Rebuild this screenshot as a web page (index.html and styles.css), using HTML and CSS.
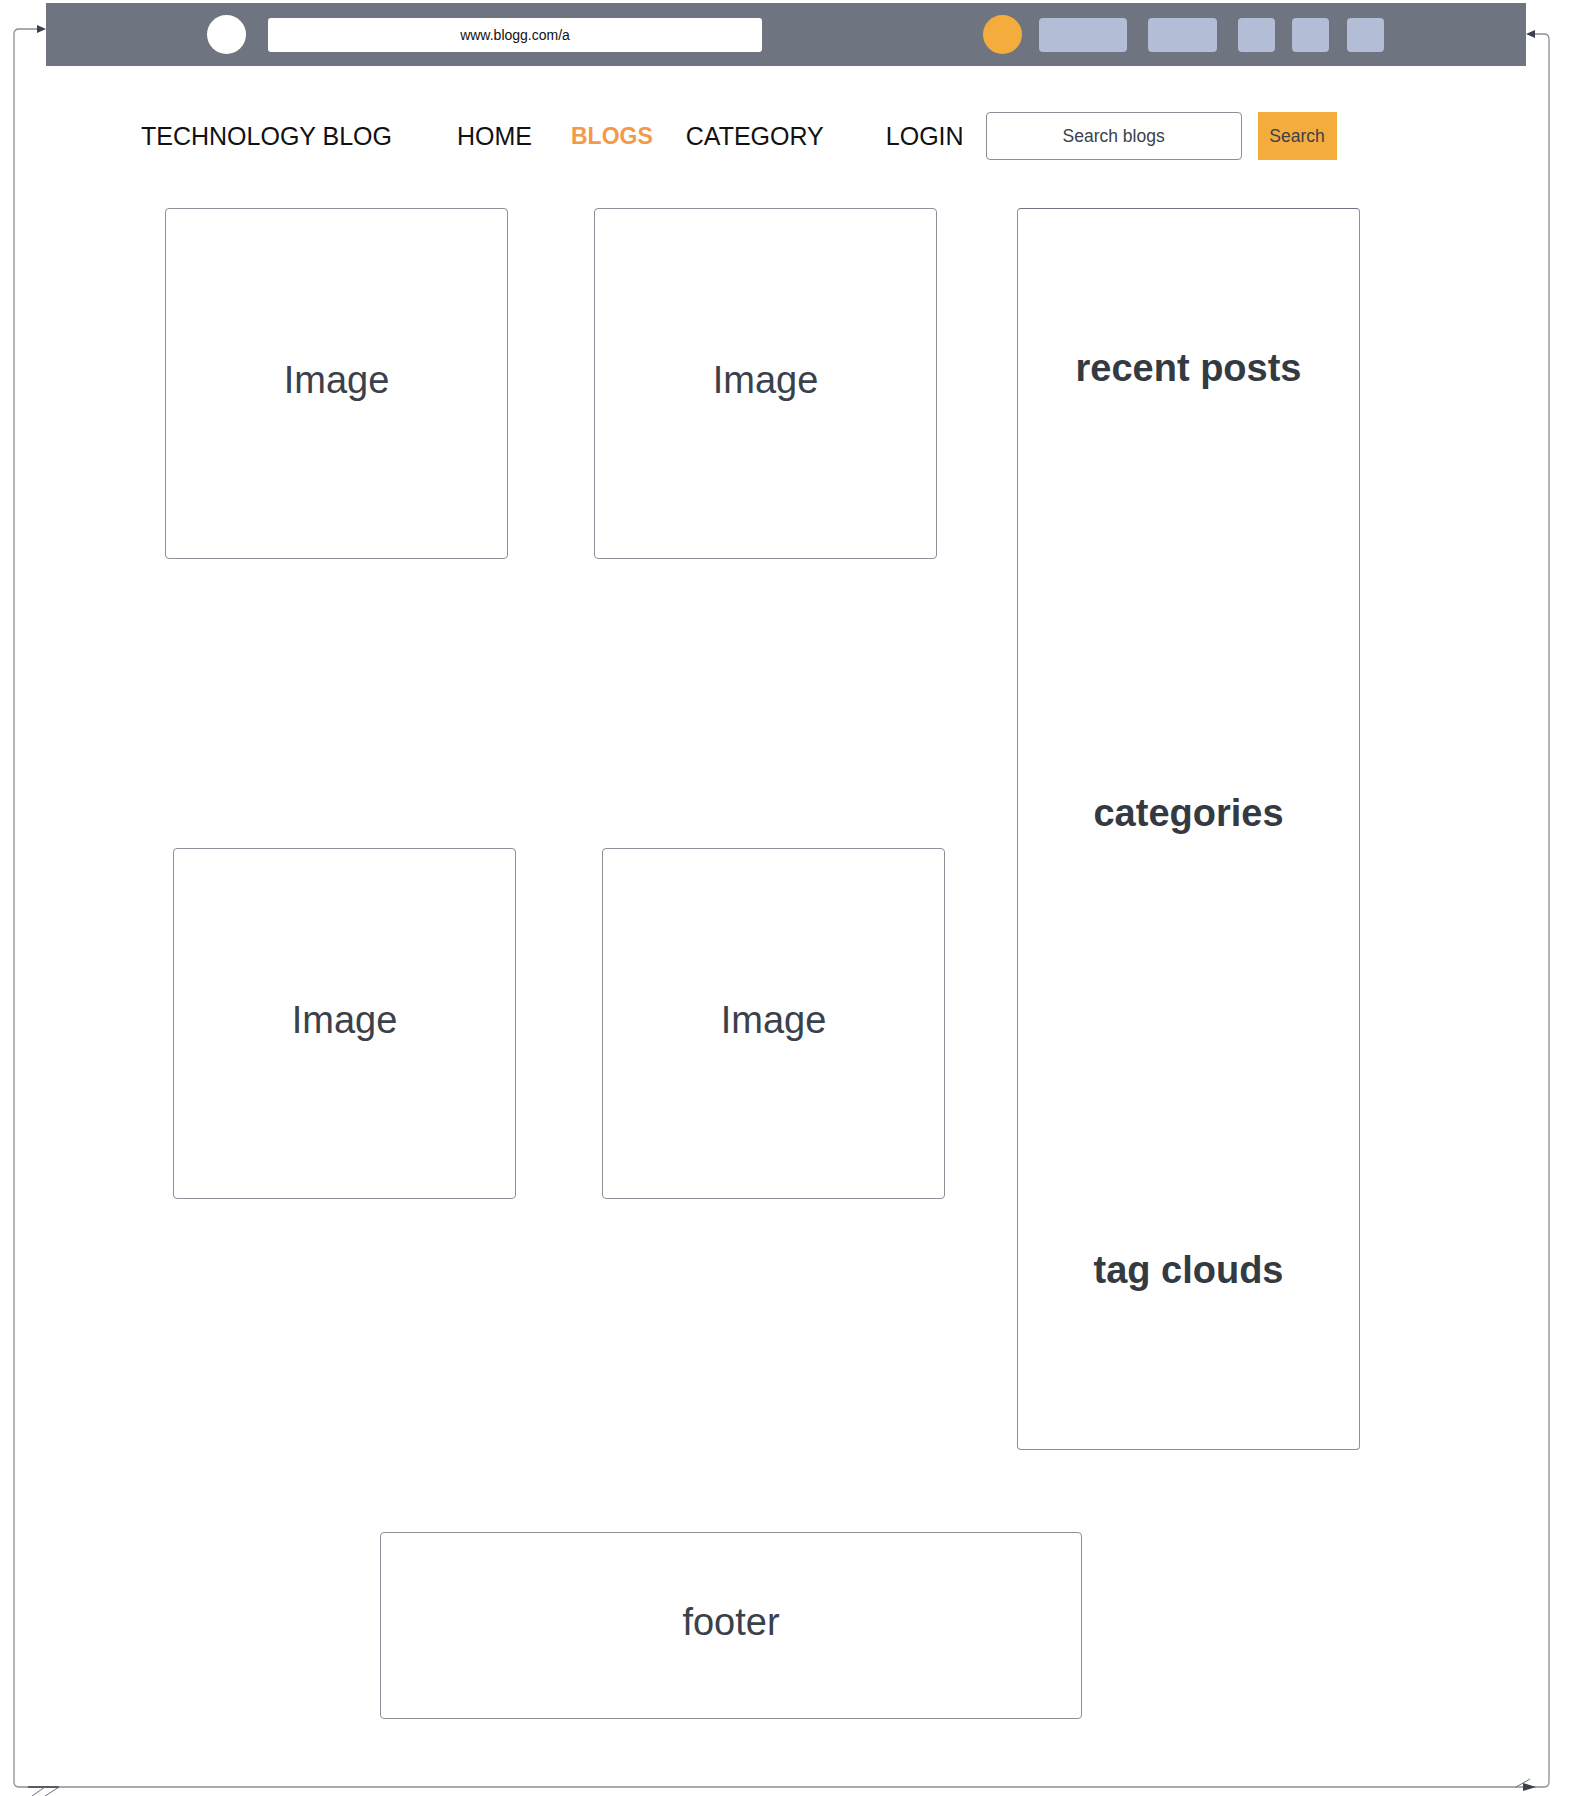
FILE: index.html
```html
<!DOCTYPE html>
<html lang="en">
<head>
  <meta charset="UTF-8" />
  <meta name="viewport" content="width=device-width, initial-scale=1.0" />
  <title>Technology Blog – wireframe</title>
  <link rel="stylesheet" href="styles.css">
</head>
<body>
  <div class="page">
    <!-- browser chrome -->
    <div class="browser">
      <span class="dot white"></span>
      <div class="url">www.blogg.com/a</div>
      <span class="dot orange"></span>
      <span class="tab wide"></span>
      <span class="tab mid"></span>
      <span class="tab small t1"></span>
      <span class="tab small t2"></span>
      <span class="tab small t3"></span>
    </div>

    <nav class="nav">
      <span class="brand">TECHNOLOGY BLOG</span>
      <a class="link home">HOME</a>
      <a class="link blogs active">BLOGS</a>
      <a class="link category">CATEGORY</a>
      <a class="link login">LOGIN</a>
      <div class="search">Search blogs</div>
      <button class="search-btn">Search</button>
    </nav>

    <div class="content">
      <div class="posts">
        <div class="card">Image</div>
        <div class="card">Image</div>
        <div class="card shift">Image</div>
        <div class="card shift">Image</div>
      </div>

      <aside class="sidebar">
        <h2 class="recent">recent posts</h2>
        <h2 class="cats">categories</h2>
        <h2 class="tags">tag clouds</h2>
      </aside>
    </div>

    <footer class="footer">footer</footer>

    <!-- connector lines of the diagram -->
    <svg class="wires" width="1572" height="1796" viewBox="0 0 1572 1796">
      <path d="M39 29 H19 Q14 29 14 34 V1782 Q14 1787 19 1787 H1544 Q1549 1787 1549 1782 V39 Q1549 34 1544 34 H1533"
            fill="none" stroke="#8a8e96" stroke-width="1.3" />
      <polygon points="46,29 37,25 37,33" fill="#3a414a" />
      <polygon points="1526,34 1535,30 1535,38" fill="#3a414a" />
      <polygon points="1536,1787 1523,1783 1523,1791" fill="#3a414a" />
      <line x1="1516" y1="1787" x2="1530" y2="1779" stroke="#6a7079" stroke-width="1" />
      <line x1="28" y1="1787" x2="59" y2="1787" stroke="#3a414a" stroke-width="1.5" />
      <line x1="32" y1="1796" x2="45" y2="1787" stroke="#6a7079" stroke-width="1" />
      <line x1="45" y1="1796" x2="59" y2="1787" stroke="#6a7079" stroke-width="1" />
    </svg>
  </div>
</body>
</html>
```

FILE: styles.css
```css
* { margin: 0; padding: 0; box-sizing: border-box; }
body {
  font-family: 'Liberation Sans', Arial, sans-serif;
  background: #fff;
  color: #3a414a;
}
.page {
  position: relative;
  width: 1572px;
  height: 1796px;
  padding-top: 3px;
  overflow: hidden;
}

/* browser bar */
.browser {
  margin-left: 46px;
  width: 1480px;
  height: 63px;
  background: #6f7580;
  display: flex;
  align-items: center;
  padding-left: 161px;
}
.dot {
  width: 39px;
  height: 39px;
  border-radius: 50%;
  flex: none;
}
.dot.white { background: #fff; }
.dot.orange { background: #f4ad3d; margin-left: 221px; }
.url {
  margin-left: 22px;
  width: 494px;
  height: 34px;
  background: #fff;
  border-radius: 3px;
  color: #111;
  font-size: 14px;
  display: flex;
  align-items: center;
  justify-content: center;
}
.tab {
  height: 34px;
  background: #b3bed6;
  border-radius: 4px;
  flex: none;
}
.tab.wide { width: 88px; margin-left: 17px; }
.tab.mid { width: 69px; margin-left: 21px; }
.tab.small { width: 37px; }
.t1 { margin-left: 21px; }
.t2 { margin-left: 17px; }
.t3 { margin-left: 18px; }

/* navigation */
.nav {
  margin-top: 46px;
  height: 48px;
  display: flex;
  align-items: center;
  padding-left: 141px;
  font-size: 25px;
  color: #111;
}
.link { color: #111; text-decoration: none; }
.home { margin-left: 65px; }
.blogs { margin-left: 39px; }
.category { margin-left: 33px; }
.login { margin-left: 62px; }
.active { color: #f2994a; font-weight: bold; font-size: 23px; }
.search {
  margin-left: 22px;
  width: 256px;
  height: 48px;
  border: 1px solid #8a8f98;
  border-radius: 4px;
  display: flex;
  align-items: center;
  justify-content: center;
  font-size: 17.5px;
  color: #3a414a;
}
.search-btn {
  margin-left: 16px;
  width: 79px;
  height: 48px;
  border: none;
  background: #f4ad3d;
  font-family: inherit;
  font-size: 17.5px;
  color: #3a414a;
}

/* main area */
.content {
  margin-top: 48px;
  display: flex;
  align-items: flex-start;
  padding-left: 165px;
}
.posts {
  display: grid;
  grid-template-columns: 343px 343px;
  column-gap: 86px;
  row-gap: 289px;
}
.card {
  height: 351px;
  border: 1px solid #8c9099;
  border-radius: 4px;
  display: flex;
  align-items: center;
  justify-content: center;
  font-size: 38px;
  padding-bottom: 6px;
}
.card.shift { margin-left: 8px; margin-right: -8px; }

.sidebar {
  margin-left: 80px;
  width: 343px;
  height: 1242px;
  border: 1px solid #8c9099;
  border-top-color: #6f7580;
  border-radius: 4px;
  display: flex;
  flex-direction: column;
  align-items: center;
  padding-top: 137px;
}
.sidebar h2 {
  font-size: 38px;
  line-height: 44px;
  font-weight: bold;
  color: #343a42;
}
.cats { margin-top: 401px; }
.tags { margin-top: 413px; }

.footer {
  margin-top: 82px;
  margin-left: 380px;
  width: 702px;
  height: 187px;
  border: 1px solid #8c9099;
  border-radius: 4px;
  display: flex;
  align-items: center;
  justify-content: center;
  font-size: 38px;
  padding-bottom: 6px;
}

.wires {
  position: absolute;
  top: 0;
  left: 0;
  pointer-events: none;
}
```
